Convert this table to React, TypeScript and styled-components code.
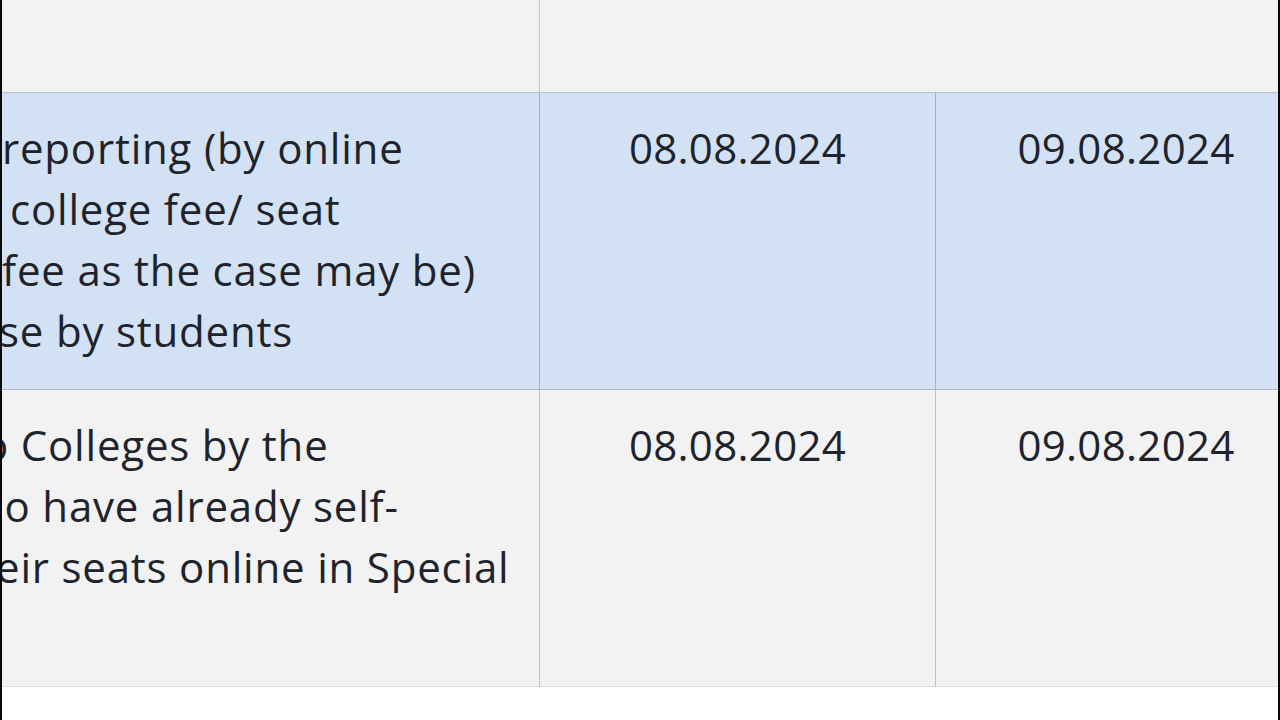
import styled, { createGlobalStyle } from "styled-components";

const GlobalStyle = createGlobalStyle`
  html, body {
    margin: 0;
    padding: 0;
    background: #ffffff;
  }
  body {
    font-family: "Open Sans", "Noto Sans", sans-serif;
    color: #1f232b;
  }
`;

type ScheduleRow = {
  lines: { text: string; shift: number }[];
  start: string;
  end: string;
  highlight?: boolean;
};

const ROWS: ScheduleRow[] = [
  {
    highlight: true,
    lines: [
      { text: "reporting (by online", shift: 0 },
      { text: "college fee/ seat", shift: 8 },
      { text: "fee as the case may be)", shift: 0 },
      { text: "se by students", shift: -3 },
    ],
    start: "08.08.2024",
    end: "09.08.2024",
  },
  {
    lines: [
      { text: "o Colleges by the", shift: -19 },
      { text: "ho have already self-", shift: -24 },
      { text: "eir seats online in Special", shift: -6 },
    ],
    start: "08.08.2024",
    end: "09.08.2024",
  },
];

const Frame = styled.div`
  height: 720px;
  border-left: 2px solid #0a0a0a;
  border-right: 2px solid #0a0a0a;
  box-sizing: border-box;
  overflow: hidden;
  background: #ffffff;
`;

const Table = styled.div`
  display: grid;
  grid-template-columns: 538px 396px 1fr;
`;

const HeadCell = styled.div<{ $span?: number }>`
  grid-column: span ${(p) => p.$span ?? 1};
  height: 92px;
  background: #f2f2f2;
  border-bottom: 1px solid #b9c3ce;
  border-right: ${(p) => (p.$span ? "none" : "1px solid #c6c6c6")};
`;

const Cell = styled.div<{ $highlight?: boolean; $last?: boolean }>`
  min-height: 297px;
  padding: 24px 0 26px;
  box-sizing: border-box;
  background: ${(p) => (p.$highlight ? "#d2e2f4" : "#f2f2f2")};
  border-bottom: 1px solid ${(p) => (p.$highlight ? "#aab6c4" : "#dedede")};
  border-right: ${(p) =>
    p.$last ? "none" : `1px solid ${p.$highlight ? "#a9b3c0" : "#c4c4c4"}`};
  overflow: hidden;
  font-size: 42px;
  line-height: 61px;
  white-space: nowrap;
`;

const Line = styled.div`
  letter-spacing: 0.8px;
`;

const DateText = styled.div<{ $offset?: number }>`
  text-align: center;
  letter-spacing: 0.3px;
  padding-left: ${(p) => p.$offset ?? 0}px;
`;

export default function App() {
  return (
    <>
      <GlobalStyle />
      <Frame>
        <Table>
          <HeadCell />
          <HeadCell $span={2} />
          {ROWS.map((row, i) => (
            <>
              <Cell key={`d${i}`} $highlight={row.highlight}>
                {row.lines.map((line) => (
                  <Line key={line.text} style={{ marginLeft: line.shift }}>
                    {line.text}
                  </Line>
                ))}
              </Cell>
              <Cell key={`s${i}`} $highlight={row.highlight}>
                <DateText>{row.start}</DateText>
              </Cell>
              <Cell key={`e${i}`} $highlight={row.highlight} $last>
                <DateText $offset={38}>{row.end}</DateText>
              </Cell>
            </>
          ))}
        </Table>
      </Frame>
    </>
  );
}
